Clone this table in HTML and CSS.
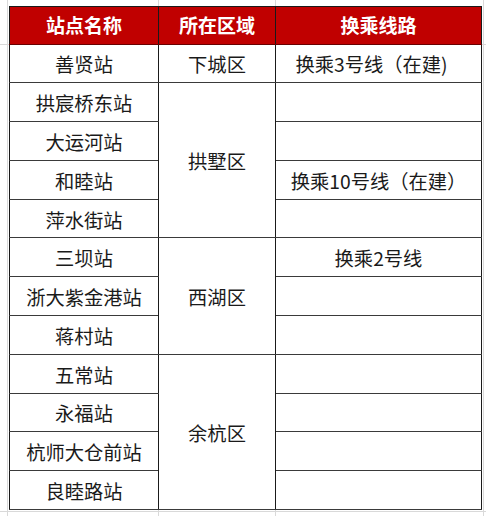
FILE: index.html
```html
<!DOCTYPE html>
<html lang="zh">
<head>
<meta charset="utf-8">
<title>站点列表</title>
<link rel="stylesheet" href="styles.css">
</head>
<body>
<table class="sheet">
  <colgroup>
    <col class="c1"><col class="c2"><col class="c3">
  </colgroup>
  <thead>
    <tr class="head"><th>站点名称</th><th>所在区域</th><th>换乘线路</th></tr>
  </thead>
  <tbody>
    <tr><td>善贤站</td><td>下城区</td><td class="shift">换乘3号线（在建)</td></tr>
    <tr><td>拱宸桥东站</td><td rowspan="4">拱墅区</td><td></td></tr>
    <tr><td>大运河站</td><td></td></tr>
    <tr><td>和睦站</td><td>换乘10号线（在建）</td></tr>
    <tr><td>萍水街站</td><td></td></tr>
    <tr><td>三坝站</td><td rowspan="3">西湖区</td><td>换乘2号线</td></tr>
    <tr><td>浙大紫金港站</td><td></td></tr>
    <tr><td>蒋村站</td><td></td></tr>
    <tr><td>五常站</td><td rowspan="4">余杭区</td><td></td></tr>
    <tr><td>永福站</td><td></td></tr>
    <tr><td>杭师大仓前站</td><td></td></tr>
    <tr><td>良睦路站</td><td></td></tr>
  </tbody>
</table>
</body>
</html>
```

FILE: styles.css
```css
html, body {
  margin: 0;
  padding: 0;
}
body {
  width: 486px;
  height: 516px;
  overflow: hidden;
  background-color: #fff;
  background-image:
    linear-gradient(#d9d9d9, #d9d9d9),
    linear-gradient(#d9d9d9, #d9d9d9),
    linear-gradient(#d9d9d9, #d9d9d9),
    linear-gradient(#d9d9d9, #d9d9d9),
    linear-gradient(#d9d9d9, #d9d9d9),
    linear-gradient(#d9d9d9, #d9d9d9);
  background-repeat: no-repeat;
  background-size: 1px 100%, 1px 100%, 1px 100%, 1px 100%, 100% 1px, 100% 1px;
  background-position: 7px 0, 158px 0, 275px 0, 483px 0, 0 44px, 0 511px;
  font-family: "Noto Sans CJK SC", "Noto Sans", sans-serif;
  color: #1a1a1a;
}
.sheet {
  margin: 6px 0 0 9px;
  width: 472px;
  border-collapse: collapse;
  table-layout: fixed;
  border: 1.5px solid #1a1a1a;
}
.c1 { width: 149px; }
.c2 { width: 117px; }
.c3 { width: 206px; }
.head th {
  height: 37.5px;
  box-sizing: border-box;
  padding: 1px 0 0;
  background: #c00000;
  color: #fff;
  font-size: 19px;
  font-weight: bold;
  border: 1px solid #1a1a1a;
  border-bottom-color: #6a0000;
  text-align: center;
  vertical-align: middle;
  line-height: 1.2;
}
.sheet td {
  height: 38.8px;
  box-sizing: border-box;
  padding: 3px 0 0;
  background: #fff;
  font-size: 19.3px;
  text-align: center;
  vertical-align: middle;
  border-left: 1px solid #1a1a1a;
  border-right: 1px solid #1a1a1a;
  border-top: 1px solid #3a3a3a;
  border-bottom: 1px solid #3a3a3a;
  line-height: 1.2;
}
.sheet td.shift {
  padding-right: 14px;
}
```
